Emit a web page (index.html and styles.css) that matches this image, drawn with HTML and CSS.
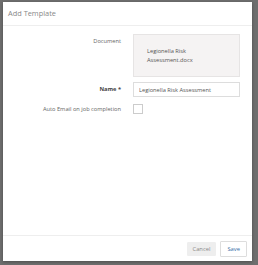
FILE: index.html
```html
<!DOCTYPE html>
<html lang="en">
<head>
    <meta charset="UTF-8">
    <title>Add Template</title>
    <link rel="stylesheet" href="styles.css">
</head>
<body>
    <div class="modal">
        <div class="modal-header">Add Template</div>
        <div class="modal-body">
            <div class="row">
                <label class="label">Document</label>
                <div class="doc-box">Legionella Risk<br>Assessment.docx</div>
            </div>
            <div class="row">
                <label class="label bold" for="name">Name *</label>
                <input class="input" id="name" type="text" value="Legionella Risk Assessment">
            </div>
            <div class="row">
                <label class="label" for="auto">Auto Email on job completion</label>
                <span class="checkbox" id="auto"></span>
            </div>
        </div>
        <div class="modal-footer">
            <button class="btn btn-cancel">Cancel</button>
            <button class="btn btn-save">Save</button>
        </div>
    </div>
</body>
</html>
```

FILE: styles.css
```css
html, body {
    margin: 0;
    height: 100%;
}
body {
    background-color: #6e6e6e;
    font-family: "Open Sans", Arial, sans-serif;
    font-size: 5.7px;
    color: #666;
    padding: 2px 6px 4px 3px;
    box-sizing: border-box;
}
.modal {
    background-color: #fff;
    height: 100%;
    display: flex;
    flex-direction: column;
    box-shadow: 0 1px 3px rgba(0,0,0,0.3);
}
.modal-header {
    height: 23px;
    line-height: 22px;
    padding-left: 5px;
    font-size: 7.4px;
    color: #888;
    border-bottom: 1px solid #eee;
}
.modal-body {
    flex: 1;
    padding-top: 8px;
}
.row {
    display: flex;
    align-items: flex-start;
    margin-bottom: 5px;
}
.label {
    width: 118px;
    text-align: right;
    padding-right: 12px;
    line-height: 15px;
    color: #666;
}
.bold {
    font-weight: bold;
    color: #444;
}
.doc-box {
    box-sizing: border-box;
    width: 107px;
    height: 43px;
    padding: 1px 0 0 13px;
    background-color: #f5f3f3;
    border: 1px solid #e6e4e4;
    line-height: 9px;
    display: flex;
    align-items: center;
    color: #555;
}
.input {
    box-sizing: border-box;
    width: 107px;
    height: 15px;
    padding: 0 5px;
    border: 1px solid #ddd;
    font-family: inherit;
    font-size: 5.7px;
    color: #555;
    margin: 0;
}
.checkbox {
    width: 8px;
    height: 8px;
    border: 1px solid #ccc;
    margin-top: 2px;
}
.modal-footer {
    height: 25px;
    border-top: 1px solid #eee;
    display: flex;
    justify-content: flex-end;
    align-items: center;
    gap: 4px;
    padding-right: 5px;
}
.btn {
    font-family: inherit;
    font-size: 5.8px;
    height: 14px;
    padding: 0 5px;
    border-radius: 1px;
}
.btn-cancel {
    background-color: #eee;
    border: 1px solid #eee;
    color: #888;
}
.btn-save {
    background-color: #fff;
    border: 1px solid #ddd;
    color: #3a6ea5;
    height: 16px;
    padding: 0 6px;
}
```
